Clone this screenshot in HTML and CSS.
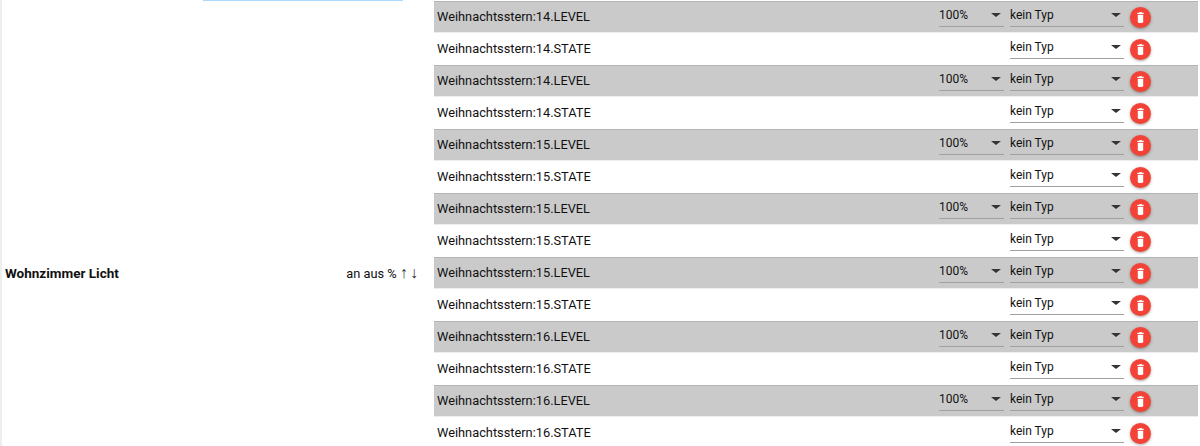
FILE: index.html
```html
<!DOCTYPE html>
<html>
<head>
    <title>Szenen</title>
    <link rel="stylesheet" href="styles.css">
</head>
<body>
    <div class="scene">
        <div class="scene-info">
            <div class="marker"></div>
            <div class="scene-name">Wohnzimmer Licht</div>
            <div class="scene-actions">an aus % <span class="arrow">↑</span> <span class="arrow">↓</span></div>
        </div>
        <div class="states">
            <div class="row level">
                <div class="state-name">Weihnachtsstern:14.LEVEL</div>
                <div class="select small"><span>100%</span><i class="caret"></i></div>
                <div class="select"><span>kein Typ</span><i class="caret"></i></div>
                <button class="del"><svg viewBox="0 0 24 24"><path d="M7 20c0 1.100.9 2 2 2h6c1.100 0 2-.9 2-2V7H7v13zM18 3h-3.500l-1-1h-3l-1 1H6v2.500h12V3z"/></svg></button>
            </div>
            <div class="row">
                <div class="state-name">Weihnachtsstern:14.STATE</div>
                <div class="select"><span>kein Typ</span><i class="caret"></i></div>
                <button class="del"><svg viewBox="0 0 24 24"><path d="M7 20c0 1.100.9 2 2 2h6c1.100 0 2-.9 2-2V7H7v13zM18 3h-3.500l-1-1h-3l-1 1H6v2.500h12V3z"/></svg></button>
            </div>
            <div class="row level">
                <div class="state-name">Weihnachtsstern:14.LEVEL</div>
                <div class="select small"><span>100%</span><i class="caret"></i></div>
                <div class="select"><span>kein Typ</span><i class="caret"></i></div>
                <button class="del"><svg viewBox="0 0 24 24"><path d="M7 20c0 1.100.9 2 2 2h6c1.100 0 2-.9 2-2V7H7v13zM18 3h-3.500l-1-1h-3l-1 1H6v2.500h12V3z"/></svg></button>
            </div>
            <div class="row">
                <div class="state-name">Weihnachtsstern:14.STATE</div>
                <div class="select"><span>kein Typ</span><i class="caret"></i></div>
                <button class="del"><svg viewBox="0 0 24 24"><path d="M7 20c0 1.100.9 2 2 2h6c1.100 0 2-.9 2-2V7H7v13zM18 3h-3.500l-1-1h-3l-1 1H6v2.500h12V3z"/></svg></button>
            </div>
            <div class="row level">
                <div class="state-name">Weihnachtsstern:15.LEVEL</div>
                <div class="select small"><span>100%</span><i class="caret"></i></div>
                <div class="select"><span>kein Typ</span><i class="caret"></i></div>
                <button class="del"><svg viewBox="0 0 24 24"><path d="M7 20c0 1.100.9 2 2 2h6c1.100 0 2-.9 2-2V7H7v13zM18 3h-3.500l-1-1h-3l-1 1H6v2.500h12V3z"/></svg></button>
            </div>
            <div class="row">
                <div class="state-name">Weihnachtsstern:15.STATE</div>
                <div class="select"><span>kein Typ</span><i class="caret"></i></div>
                <button class="del"><svg viewBox="0 0 24 24"><path d="M7 20c0 1.100.9 2 2 2h6c1.100 0 2-.9 2-2V7H7v13zM18 3h-3.500l-1-1h-3l-1 1H6v2.500h12V3z"/></svg></button>
            </div>
            <div class="row level">
                <div class="state-name">Weihnachtsstern:15.LEVEL</div>
                <div class="select small"><span>100%</span><i class="caret"></i></div>
                <div class="select"><span>kein Typ</span><i class="caret"></i></div>
                <button class="del"><svg viewBox="0 0 24 24"><path d="M7 20c0 1.100.9 2 2 2h6c1.100 0 2-.9 2-2V7H7v13zM18 3h-3.500l-1-1h-3l-1 1H6v2.500h12V3z"/></svg></button>
            </div>
            <div class="row">
                <div class="state-name">Weihnachtsstern:15.STATE</div>
                <div class="select"><span>kein Typ</span><i class="caret"></i></div>
                <button class="del"><svg viewBox="0 0 24 24"><path d="M7 20c0 1.100.9 2 2 2h6c1.100 0 2-.9 2-2V7H7v13zM18 3h-3.500l-1-1h-3l-1 1H6v2.500h12V3z"/></svg></button>
            </div>
            <div class="row level">
                <div class="state-name">Weihnachtsstern:15.LEVEL</div>
                <div class="select small"><span>100%</span><i class="caret"></i></div>
                <div class="select"><span>kein Typ</span><i class="caret"></i></div>
                <button class="del"><svg viewBox="0 0 24 24"><path d="M7 20c0 1.100.9 2 2 2h6c1.100 0 2-.9 2-2V7H7v13zM18 3h-3.500l-1-1h-3l-1 1H6v2.500h12V3z"/></svg></button>
            </div>
            <div class="row">
                <div class="state-name">Weihnachtsstern:15.STATE</div>
                <div class="select"><span>kein Typ</span><i class="caret"></i></div>
                <button class="del"><svg viewBox="0 0 24 24"><path d="M7 20c0 1.100.9 2 2 2h6c1.100 0 2-.9 2-2V7H7v13zM18 3h-3.500l-1-1h-3l-1 1H6v2.500h12V3z"/></svg></button>
            </div>
            <div class="row level">
                <div class="state-name">Weihnachtsstern:16.LEVEL</div>
                <div class="select small"><span>100%</span><i class="caret"></i></div>
                <div class="select"><span>kein Typ</span><i class="caret"></i></div>
                <button class="del"><svg viewBox="0 0 24 24"><path d="M7 20c0 1.100.9 2 2 2h6c1.100 0 2-.9 2-2V7H7v13zM18 3h-3.500l-1-1h-3l-1 1H6v2.500h12V3z"/></svg></button>
            </div>
            <div class="row">
                <div class="state-name">Weihnachtsstern:16.STATE</div>
                <div class="select"><span>kein Typ</span><i class="caret"></i></div>
                <button class="del"><svg viewBox="0 0 24 24"><path d="M7 20c0 1.100.9 2 2 2h6c1.100 0 2-.9 2-2V7H7v13zM18 3h-3.500l-1-1h-3l-1 1H6v2.500h12V3z"/></svg></button>
            </div>
            <div class="row level">
                <div class="state-name">Weihnachtsstern:16.LEVEL</div>
                <div class="select small"><span>100%</span><i class="caret"></i></div>
                <div class="select"><span>kein Typ</span><i class="caret"></i></div>
                <button class="del"><svg viewBox="0 0 24 24"><path d="M7 20c0 1.100.9 2 2 2h6c1.100 0 2-.9 2-2V7H7v13zM18 3h-3.500l-1-1h-3l-1 1H6v2.500h12V3z"/></svg></button>
            </div>
            <div class="row">
                <div class="state-name">Weihnachtsstern:16.STATE</div>
                <div class="select"><span>kein Typ</span><i class="caret"></i></div>
                <button class="del"><svg viewBox="0 0 24 24"><path d="M7 20c0 1.100.9 2 2 2h6c1.100 0 2-.9 2-2V7H7v13zM18 3h-3.500l-1-1h-3l-1 1H6v2.500h12V3z"/></svg></button>
            </div>
        </div>
    </div>
</body>
</html>
```

FILE: styles.css
```css
html, body {
    margin: 0;
    height: 446px;
    overflow: hidden;
    background: #fff;
}
body {
    font-family: Roboto, sans-serif;
    font-size: 12.8px;
    color: #111;
    border-left: 2px solid #eee;
}
.scene {
    display: flex;
    height: 446px;
}
.scene-info {
    width: 432px;
    flex: none;
    display: flex;
    align-items: center;
    position: relative;
    padding: 100px 17px 0 3px;
    box-sizing: border-box;
}
.marker {
    position: absolute;
    top: 0;
    left: 201px;
    width: 200px;
    height: 1px;
    background: #a9d8fb;
}
.scene-name {
    flex: 1;
    font-weight: bold;
    font-size: 13.5px;
}
.scene-actions {
    line-height: 16px;
}
.arrow {
    color: #333;
    font-family: "Liberation Sans", sans-serif;
    font-size: 16px;
    line-height: 1;
    letter-spacing: -1px;
}
.states {
    flex: none;
    width: 764px;
    height: 446px;
    overflow: hidden;
    padding-top: 1px;
    box-sizing: border-box;
}
.row {
    height: 32px;
    box-sizing: border-box;
    display: flex;
    align-items: flex-start;
    padding-left: 3px;
    border-top: 1px solid transparent;
    border-bottom: 1px solid transparent;
    line-height: 30px;
}
.row.level {
    background: #cacaca;
    border-top-color: #b4b4b4;
    border-bottom-color: #ededed;
}
.state-name {
    flex: 1;
}
.select {
    width: 114px;
    height: 22px;
    margin: 3px 0 0 6px;
    box-sizing: border-box;
    border-bottom: 1px solid #a0a0a0;
    display: flex;
    justify-content: space-between;
    padding: 3px 3px 0 0;
    font-size: 12px;
    line-height: 15px;
}
.select.small {
    width: 65px;
}
.caret {
    width: 0;
    height: 0;
    margin-top: 5px;
    border-left: 5px solid transparent;
    border-right: 5px solid transparent;
    border-top: 4px solid #333;
}
.del {
    width: 21px;
    height: 21px;
    margin: 5px 47px 0 6px;
    padding: 0;
    border: none;
    border-radius: 50%;
    background: #f44336;
    box-shadow: 0 1px 3px rgba(0,0,0,0.35);
    display: flex;
    align-items: center;
    justify-content: center;
}
.del svg {
    width: 13px;
    height: 13px;
    fill: #fff;
}
```
